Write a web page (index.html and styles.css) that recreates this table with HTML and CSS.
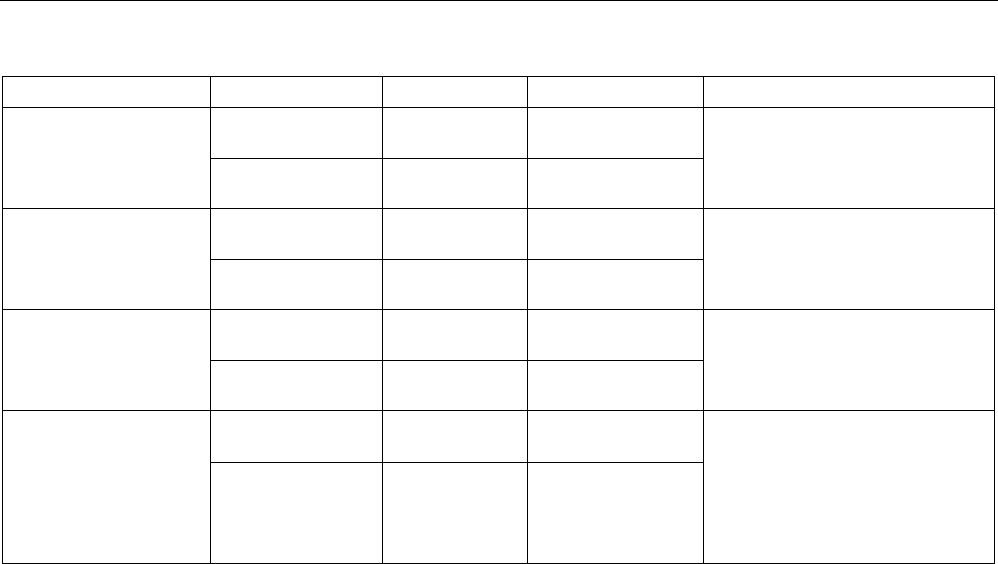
FILE: index.html
```html
<!DOCTYPE html>
<html lang="en">
<head>
<meta charset="utf-8">
<title>Table</title>
<link rel="stylesheet" href="styles.css">
</head>
<body>
<div class="rule"></div>
<div class="grid">
  <div class="cell"></div><div class="cell"></div><div class="cell"></div><div class="cell"></div><div class="cell"></div>

  <div class="cell span"></div><div class="cell"></div><div class="cell"></div><div class="cell"></div><div class="cell span"></div>
  <div class="cell"></div><div class="cell"></div><div class="cell"></div>

  <div class="cell span"></div><div class="cell"></div><div class="cell"></div><div class="cell"></div><div class="cell span"></div>
  <div class="cell"></div><div class="cell"></div><div class="cell"></div>

  <div class="cell span"></div><div class="cell"></div><div class="cell"></div><div class="cell"></div><div class="cell span"></div>
  <div class="cell"></div><div class="cell"></div><div class="cell"></div>

  <div class="cell span"></div><div class="cell"></div><div class="cell"></div><div class="cell"></div><div class="cell span"></div>
  <div class="cell"></div><div class="cell"></div><div class="cell"></div>
</div>
</body>
</html>
```

FILE: styles.css
```css
html, body {
  margin: 0;
  padding: 0;
  background: #fff;
  font-family: "Liberation Sans", Arial, sans-serif;
}
.rule {
  height: 1px;
  background: #000;
}
.grid {
  display: grid;
  width: max-content;
  margin: 75px 0 0 2px;
  padding: 1px;
  gap: 1px;
  background: #000;
  grid-template-columns: 207px 171px 144px 175px 290px;
  grid-template-rows: 30px 50px 49px 50px 49px 50px 49px 51px 100px;
}
.cell {
  background: #fff;
}
.span {
  grid-row: span 2;
}
```
